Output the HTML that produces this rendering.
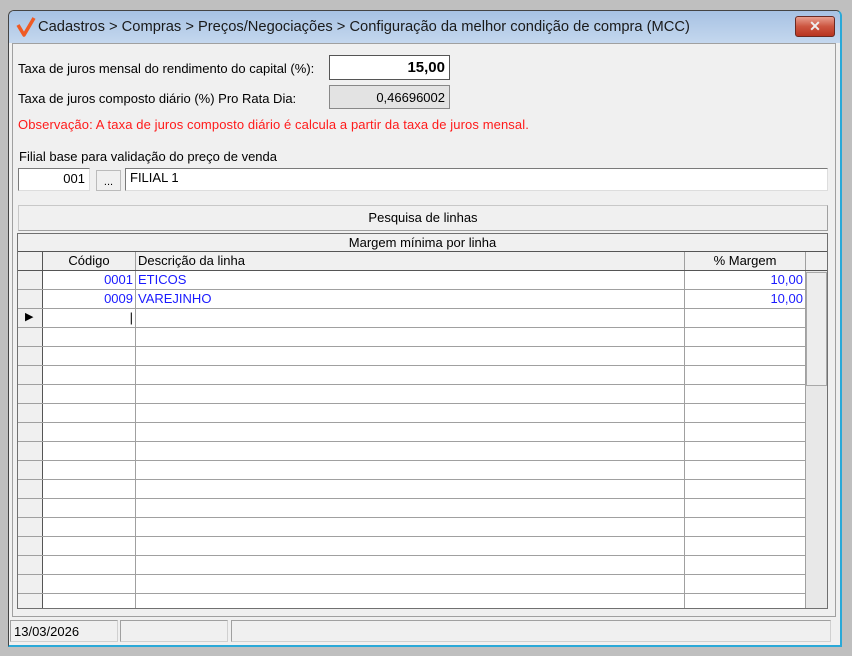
<!DOCTYPE html>
<html><head><meta charset="utf-8"><style>
*{box-sizing:border-box;margin:0;padding:0}
body{width:852px;height:656px;background:#bfbfbf;font-family:"Liberation Sans",sans-serif;font-size:13px;color:#000;position:relative;overflow:hidden}
.a{position:absolute}
.win{left:8px;top:10px;width:834px;height:637px;background:#f0f0f0;border:1px solid #444;border-radius:6px 6px 0 0;border-right:2px solid #2aa9d8;border-bottom:2px solid #2aa9d8}
.title{left:9px;top:11px;width:831px;height:32px;background:linear-gradient(#a7c2e3,#c4d7ee);border-radius:5px 5px 0 0}
.client{left:12px;top:43px;width:824px;height:574px;border:1px solid #a0a0a0;background:#f0f0f0}
.inp{background:#fff;border:1px solid #7a7a7a;border-right-color:#ddd;border-bottom-color:#ddd;text-align:right;padding:2px 4px}
.grid{left:17px;top:233px;width:811px;height:376px;border:1px solid #707070;background:#fff;overflow:hidden}
.row{position:absolute;left:0;height:19px;width:788px;border-bottom:1px solid #a0a0a0}
.c{position:absolute;top:0;height:18px;line-height:17px;border-right:1px solid #a0a0a0;padding:0 2px;white-space:nowrap}
.blue{color:#1a1aff}
.sp{position:absolute;top:620px;height:22px;border:1px solid #d0d0d0;border-top-color:#a0a0a0;border-left-color:#a0a0a0;background:#f0f0f0;padding:3px 3px}
</style></head><body>
<div class="a win"></div>
<div class="a title"></div>
<svg class="a" style="left:16px;top:16px" width="20" height="22" viewBox="0 0 20 22"><path d="M2 9 L8 19 L18 2" fill="none" stroke="#ef5a24" stroke-width="3.5" stroke-linejoin="round"/></svg>
<div class="a" style="left:38px;top:19px;font-size:14.7px;color:#1a1a1a">Cadastros &gt; Compras &gt; Preços/Negociações &gt; Configuração da melhor condição de compra (MCC)</div>
<div class="a" style="left:795px;top:16px;width:40px;height:21px;border:1px solid #6b2a22;border-radius:3px;background:linear-gradient(#e8a090,#cc5540 50%,#b83420);color:#eee;font-weight:bold;text-align:center;font-size:14px;line-height:19px">✕</div>
<div class="a client"></div>
<div class="a" style="left:18px;top:61px">Taxa de juros mensal do rendimento do capital (%):</div>
<div class="a inp" style="left:329px;top:55px;width:121px;height:25px;font-weight:bold;font-size:15px;border:1px solid #555;padding-top:3px">15,00</div>
<div class="a" style="left:18px;top:91px">Taxa de juros composto diário (%) Pro Rata Dia:</div>
<div class="a inp" style="left:329px;top:85px;width:121px;height:24px;background:#e3e3e3;border-color:#888;padding-top:4px">0,46696002</div>
<div class="a" style="left:18px;top:117px;color:#ff1a1a;letter-spacing:0.1px">Observação: A taxa de juros composto diário é calcula a partir da taxa de juros mensal.</div>
<div class="a" style="left:19px;top:149px">Filial base para validação do preço de venda</div>
<div class="a inp" style="left:18px;top:168px;width:72px;height:23px">001</div>
<div class="a" style="left:96px;top:170px;width:25px;height:21px;border:1px solid #bbb;background:#f0f0f0;text-align:center;line-height:22px;font-size:11px">...</div>
<div class="a inp" style="left:125px;top:168px;width:703px;height:23px;text-align:left;padding-top:1px">FILIAL 1</div>
<div class="a" style="left:18px;top:205px;width:810px;height:26px;border:1px solid #c8c8c8;border-bottom-color:#a0a0a0;border-right-color:#a0a0a0;background:#f0f0f0;text-align:center;line-height:24px">Pesquisa de linhas</div>
<div class="a grid">
<div class="a" style="left:0;top:0;width:809px;height:18px;background:#f0f0f0;border-bottom:1px solid #555;text-align:center;line-height:17px">Margem mínima por linha</div>
<div class="a" style="left:0;top:18px;width:809px;height:19px;background:#f0f0f0;border-bottom:1px solid #555"></div>
<div class="row" style="top:18px;background:#f0f0f0;border-bottom:1px solid #555">
<div class="c" style="left:0;width:25px;border-right:1px solid #555"></div>
<div class="c" style="left:25px;width:93px;text-align:center">Código</div>
<div class="c" style="left:118px;width:549px">Descrição da linha</div>
<div class="c" style="left:667px;width:121px;text-align:center">% Margem</div>
</div>
<div class="row" style="top:37px"><div class="c" style="left:0;width:25px;background:#f0f0f0;border-right:1px solid #555"></div><div class="c blue" style="left:25px;width:93px;text-align:right">0001</div><div class="c blue" style="left:118px;width:549px">ETICOS</div><div class="c blue" style="left:667px;width:121px;text-align:right">10,00</div></div>
<div class="row" style="top:56px"><div class="c" style="left:0;width:25px;background:#f0f0f0;border-right:1px solid #555"></div><div class="c blue" style="left:25px;width:93px;text-align:right">0009</div><div class="c blue" style="left:118px;width:549px">VAREJINHO</div><div class="c blue" style="left:667px;width:121px;text-align:right">10,00</div></div>
<div class="row" style="top:75px"><div class="c" style="left:0;width:25px;background:#f0f0f0;border-right:1px solid #555;font-size:11px;padding-left:7px">▶</div><div class="c" style="left:25px;width:93px;text-align:right">|</div><div class="c" style="left:118px;width:549px"></div><div class="c" style="left:667px;width:121px"></div></div>
<div id="rows"></div>
<div class="a" style="left:788px;top:37px;width:21px;height:339px;background:#e8e8e8"></div>
<div class="a" style="left:788px;top:38px;width:21px;height:114px;background:#ededed;border:1px solid #a8a8a8"></div>
</div>
<div class="sp" style="left:10px;width:108px">13/03/2026</div>
<div class="sp" style="left:120px;width:108px"></div>
<div class="sp" style="left:231px;width:600px"></div>
<script>
var h='';for(var i=0;i<15;i++){var t=94+i*19;h+='<div class="row" style="top:'+t+'px"><div class="c" style="left:0;width:25px;background:#f0f0f0;border-right:1px solid #555"></div><div class="c" style="left:25px;width:93px"></div><div class="c" style="left:118px;width:549px"></div><div class="c" style="left:667px;width:121px"></div></div>';}
document.getElementById('rows').outerHTML=h;
</script>
</body></html>
